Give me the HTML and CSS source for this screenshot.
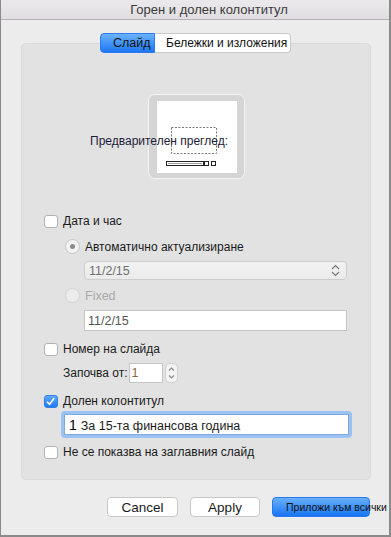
FILE: index.html
```html
<!DOCTYPE html>
<html lang="bg">
<head>
    <meta charset="UTF-8">
    <title>Горен и долен колонтитул</title>
    <link rel="stylesheet" href="styles.css">
</head>
<body>
    <div class="window">
        <div class="titlebar">Горен и долен колонтитул</div>

        <div class="content">
            <div class="tabs">
                <span class="tab tab-active">Слайд</span>
                <span class="tab tab-notes">Бележки и изложения</span>
            </div>

            <div class="panel">
                <div class="preview">
                    <div class="preview-frame">
                        <div class="preview-page">
                            <svg width="80" height="72" viewBox="0 0 80 72">
                                <rect x="14.5" y="26.5" width="45" height="26" fill="none" stroke="#7a7a7a" stroke-dasharray="2 1.5"/>
                                <rect x="9.5" y="60.5" width="37" height="4" fill="#fff" stroke="#222"/>
                                <line x1="11" y1="62.5" x2="45" y2="62.5" stroke="#999"/>
                                <rect x="47.5" y="60.5" width="4" height="4" fill="#fff" stroke="#222"/>
                                <rect x="54.5" y="60.5" width="4" height="4" fill="#fff" stroke="#222"/>
                            </svg>
                        </div>
                    </div>
                    <span class="preview-label">Предварителен преглед:</span>
                </div>

                <div class="row row-date">
                    <span class="checkbox"></span>
                    <span>Дата и час</span>
                </div>

                <div class="row row-auto">
                    <span class="radio radio-on"></span>
                    <span>Автоматично актуализиране</span>
                </div>

                <div class="select">
                    <span>11/2/15</span>
                    <svg width="9" height="13" viewBox="0 0 9 13">
                        <path d="M1 5 L4.5 1.5 L8 5 M1 8 L4.5 11.5 L8 8" fill="none" stroke="#777" stroke-width="1.2"/>
                    </svg>
                </div>

                <div class="row row-fixed">
                    <span class="radio radio-off"></span>
                    <span>Fixed</span>
                </div>

                <div class="field field-fixed">11/2/15</div>

                <div class="row row-number">
                    <span class="checkbox"></span>
                    <span>Номер на слайда</span>
                </div>

                <div class="row row-start">
                    <span>Започва от:</span>
                    <span class="field field-start">1</span>
                    <span class="stepper">
                        <svg width="13" height="20" viewBox="0 0 13 20">
                            <path d="M4 7.5 L6.5 5 L9 7.5 M4 12.5 L6.5 15 L9 12.5" fill="none" stroke="#888" stroke-width="1.1"/>
                        </svg>
                    </span>
                </div>

                <div class="row row-footer">
                    <span class="checkbox checkbox-on">
                        <svg width="13" height="13" viewBox="0 0 13 13">
                            <path d="M3 6.8 L5.5 9.3 L10.2 3.2" fill="none" stroke="#fff" stroke-width="1.6"/>
                        </svg>
                    </span>
                    <span>Долен колонтитул</span>
                </div>

                <div class="footer-ring">
                    <div class="field field-footer"><span class="cursor-num">1</span>За 15-та финансова година</div>
                </div>

                <div class="row row-title">
                    <span class="checkbox"></span>
                    <span>Не се показва на заглавния слайд</span>
                </div>
            </div>

            <div class="buttons">
                <button class="btn btn-cancel">Cancel</button>
                <button class="btn btn-apply">Apply</button>
                <button class="btn btn-all">Приложи към всички</button>
            </div>
        </div>
    </div>
</body>
</html>
```

FILE: styles.css
```css
* {
    box-sizing: border-box;
}
body {
    margin: 0;
    font-family: "Liberation Sans", Arial, sans-serif;
    font-size: 12px;
    color: #1a1a1a;
    background: #ececec;
}
.window {
    width: 391px;
    height: 537px;
    background: #ececec;
    border-left: 1px solid #8a8a8a;
    border-right: 2px solid #8a8a8a;
    border-bottom: 2px solid #8a8a8a;
    overflow: hidden;
}
.titlebar {
    height: 20px;
    line-height: 19px;
    padding-left: 28px;
    text-align: center;
    font-size: 13px;
    color: #3a3a3a;
    background: linear-gradient(#ebe9eb, #e0dee0);
    border-bottom: 1px solid #b4b4b4;
}
.content {
    padding-top: 13px;
}
.tabs {
    display: flex;
    justify-content: center;
    position: relative;
    z-index: 1;
    height: 20px;
    margin-left: 1px;
}
.tab {
    height: 20px;
    line-height: 19px;
    font-size: 12.5px;
    color: #111;
    white-space: nowrap;
    background: #fff;
    border: 1px solid #c9c9c9;
}
.tab-active {
    width: 55px;
    padding-left: 12px;
    border-radius: 4px 0 0 4px;
    border-color: #2c7cf0;
    background: linear-gradient(#6cb2fb, #1b77f4);
}
.tab-notes {
    width: 136px;
    padding-left: 11px;
    font-size: 12px;
    border-left: none;
    border-radius: 0 4px 4px 0;
}
.panel {
    width: 350px;
    height: 437px;
    margin: -10px 0 0 20px;
    padding: 50px 0 0 22px;
    background: #e2e2e2;
    border: 1px solid #d9d9d9;
    border-radius: 5px;
}
.preview {
    position: relative;
    height: 85px;
}
.preview-frame {
    width: 97px;
    height: 85px;
    margin-left: 104px;
    padding: 6px 7px 5px 8px;
    background: #d5d5d5;
    border: 1px solid #f4f4f4;
    border-radius: 7px;
}
.preview-page {
    width: 80px;
    height: 72px;
    background: #fff;
}
.preview-page svg {
    display: block;
}
.preview-label {
    position: absolute;
    left: 46px;
    top: 40px;
    line-height: 14px;
    color: #1c1c3a;
    white-space: nowrap;
}
.row {
    display: flex;
    align-items: center;
    height: 14px;
    white-space: nowrap;
}
.checkbox {
    width: 14px;
    height: 13px;
    margin-right: 5px;
    background: #fff;
    border: 1px solid #b3b3b3;
    border-radius: 3px;
}
.checkbox-on {
    border-color: #2f7fe9;
    background: linear-gradient(#5ea9fa, #2379f0);
}
.checkbox svg {
    display: block;
    margin: -1px 0 0 -1px;
}
.radio {
    position: relative;
    width: 15px;
    height: 15px;
    margin-right: 5px;
    border-radius: 50%;
    border: 1px solid #c6c6c6;
    background: #f3f3f3;
}
.radio-on::after {
    content: "";
    position: absolute;
    left: 4px;
    top: 4px;
    width: 5px;
    height: 5px;
    border-radius: 50%;
    background: #8a8a8a;
}
.radio-off {
    border-color: #d4d4d4;
    background: #ececec;
}
.row-date {
    margin-top: 35px;
}
.row-auto {
    height: 15px;
    margin: 11px 0 0 21px;
}
.select {
    display: flex;
    align-items: center;
    justify-content: space-between;
    width: 263px;
    height: 19px;
    margin: 7px 0 0 40px;
    padding: 0 6px 0 4px;
    color: #707070;
    font-size: 12.5px;
    background: linear-gradient(#f2f2f2, #ebebeb);
    border: 1px solid #cdcdcd;
    border-radius: 4px;
}
.select svg {
    display: block;
}
.row-fixed {
    height: 15px;
    margin: 8px 0 0 21px;
    color: #a9a9a9;
    font-size: 12.5px;
}
.field {
    background: #fff;
    border: 1px solid #c6c6c6;
    color: #555;
    font-size: 12.5px;
}
.field-fixed {
    width: 263px;
    height: 21px;
    line-height: 20px;
    margin: 7px 0 0 40px;
    padding-left: 3px;
}
.row-number {
    margin-top: 11px;
}
.row-start {
    height: 20px;
    margin: 7px 0 0 19px;
}
.field-start {
    width: 34px;
    height: 20px;
    line-height: 19px;
    margin-left: 1px;
    padding-left: 2px;
    color: #8a6a3a;
}
.stepper {
    width: 13px;
    height: 20px;
    margin-left: 2px;
    background: #f4f4f4;
    border: 1px solid #d0d0d0;
    border-radius: 5px;
}
.stepper svg {
    display: block;
    margin: -1px 0 0 -1px;
}
.row-footer {
    margin-top: 11px;
}
.footer-ring {
    width: 291px;
    height: 27px;
    margin: 3px 0 0 17px;
    padding: 3px;
    background: #9cc2f2;
    border-radius: 4px;
}
.field-footer {
    height: 21px;
    line-height: 21px;
    padding-left: 4px;
    color: #1a1a1a;
    font-size: 12.5px;
    border-color: #7ea8de;
}
.cursor-num {
    margin-right: 4px;
    font-size: 14px;
    color: #000;
}
.row-title {
    margin-top: 7px;
}
.buttons {
    display: flex;
    justify-content: flex-end;
    gap: 12px;
    margin-top: 17px;
    padding-right: 19px;
}
.btn {
    height: 20px;
    padding: 0;
    font-family: "Liberation Sans", Arial, sans-serif;
    font-size: 13.5px;
    color: #1a1a1a;
    background: #fff;
    border: 1px solid #c8c8c8;
    border-radius: 4px;
}
.btn-cancel {
    width: 71px;
}
.btn-apply {
    width: 70px;
}
.btn-all {
    width: 98px;
    padding-left: 13px;
    text-align: left;
    font-size: 10.5px;
    white-space: nowrap;
    overflow: visible;
    color: #111;
    border-color: #2a78ee;
    background: linear-gradient(#69b0fb, #1775f4);
}
```
